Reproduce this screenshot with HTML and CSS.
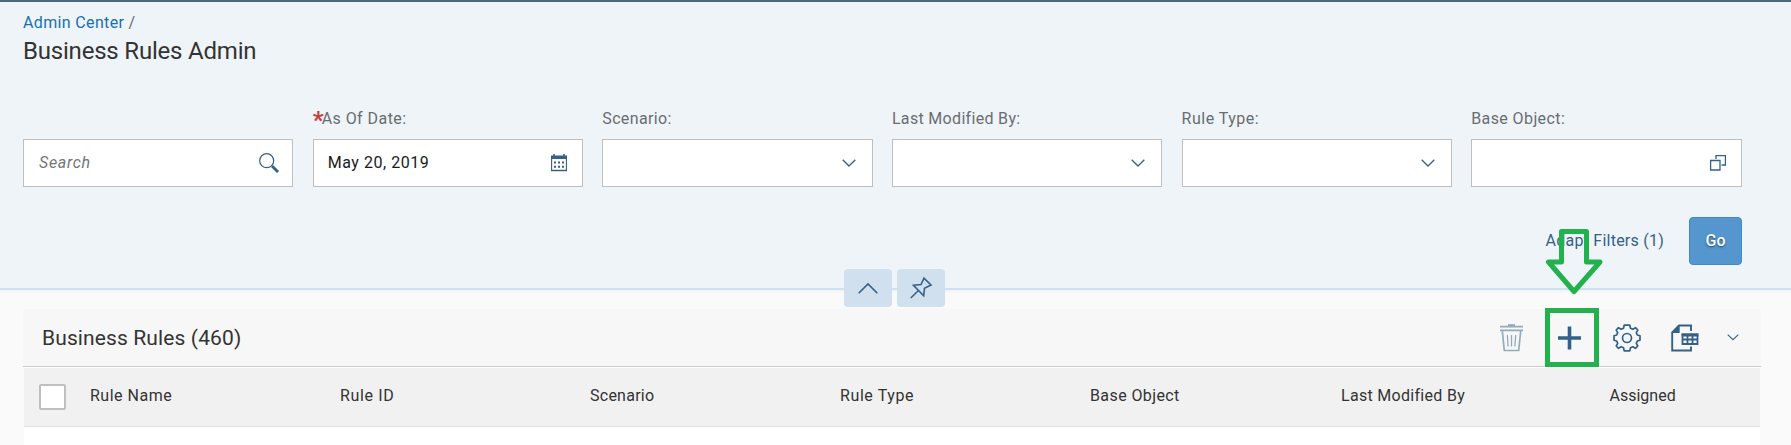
FILE: index.html
```html
<!DOCTYPE html>
<html>
<head>
    <meta charset="UTF-8">
    <title>Business Rules Admin</title>
    <link rel="stylesheet" href="styles.css">
</head>
<body>

<div class="header">
    <div class="crumb"><a>Admin Center</a> <span>/</span></div>
    <h1 class="title"><span>Business Rules Admin</span></h1>
    <div class="filters">
        <div class="field">
            <label></label>
            <div class="input">
                <span class="placeholder">Search</span>
                <svg class="ico-search" width="20" height="20" viewBox="0 0 20 20"><circle cx="7.7" cy="7.7" r="7" stroke-width="1.2"/><path d="M13 13l6 6" stroke-width="2.8"/></svg>
            </div>
        </div>
        <div class="field">
            <label><b class="required">*</b><span class="t-date">As Of Date:</span></label>
            <div class="input">
                <span class="value">May 20, 2019</span>
                <svg class="ico-date" width="16" height="18" viewBox="0 0 16 18"><path d="M.6 2v14.5h14.8V2" stroke-width="1.1"/><path d="M0 1.5h2.2V0h1.6v1.500h8.400V0h1.600v1.500H16V5H0z" fill="#346187" stroke="none"/><path d="M3 8.500h2m2 0h2m2 0h2M3 12.700h2m2 0h2m2 0h2" stroke-width="1.900"/><path d="M0 16.500h16" stroke-width="1.500"/></svg>
            </div>
        </div>
        <div class="field">
            <label><span class="t-scenario">Scenario:</span></label>
            <div class="input"><svg class="ico-down" width="14" height="8" viewBox="0 0 14 8"><path d="M.7.700l6.300 6.300 6.300-6.300"/></svg></div>
        </div>
        <div class="field">
            <label><span class="t-modified">Last Modified By:</span></label>
            <div class="input"><svg class="ico-down" width="14" height="8" viewBox="0 0 14 8"><path d="M.7.700l6.300 6.300 6.300-6.300"/></svg></div>
        </div>
        <div class="field">
            <label><span class="t-type">Rule Type:</span></label>
            <div class="input"><svg class="ico-down" width="14" height="8" viewBox="0 0 14 8"><path d="M.7.700l6.300 6.300 6.300-6.300"/></svg></div>
        </div>
        <div class="field">
            <label><span class="t-base">Base Object:</span></label>
            <div class="input"><svg class="ico-help" width="16" height="16" viewBox="0 0 16 16"><path d="M.6 5.500h9.400v9.500H.6zM6 4V.600h9.400V10H11.500"/></svg></div>
        </div>
    </div>
    <div class="actions">
        <a class="adapt">Adapt Filters (1)</a>
        <a class="go">Go</a>
    </div>
    <div class="toggles">
        <a><svg width="20" height="11" viewBox="0 0 20 11"><path d="M.7 10.300L10 1l9.300 9.300"/></svg></a>
        <a><svg width="22" height="22" viewBox="0 0 22 22"><path d="M.8 21l7.900-7.700M3.500 8.300l7.500-.800 3-6.300 7 6.800-6.500 3.200-.800 7.500z"/></svg></a>
    </div>
</div>

<div class="table">
    <div class="toolbar">
        <h2><span>Business Rules (460)</span></h2>
        <svg class="disabled" width="28" height="28" viewBox="0 0 28 28"><path d="M2 2.700h23M2 6.300h23" stroke-width="1.800"/><path d="M10 1.300h7" stroke-width="2.400"/><path d="M4.300 7l2 19.500h14.400l2-19.500" stroke-width="1.700"/><path d="M9.300 11l.800 11.500M13.500 11v11.500M17.700 11l-.800 11.500" stroke-width="1.300"/></svg>
        <svg width="28" height="28" viewBox="0 0 28 28"><path d="M2 14h23M13.500 2.500v23" stroke-width="3.600"/></svg>
        <svg width="28" height="28" viewBox="0 0 28 28"><path d="M11.200 1.200h5.600l.700 3 2.300 1 2.700-1.500 2.300 2.300-1.500 2.700 1 2.300 2.700.700v4.600l-2.700.700-1 2.300 1.500 2.700-2.300 2.300-2.700-1.500-2.300 1-.700 3h-5.600l-.700-3-2.300-1-2.700 1.500-2.300-2.300 1.500-2.700-1-2.300-2.700-.700v-4.600l2.700-.700 1-2.300-1.500-2.700 2.300-2.300 2.700 1.500 2.300-1z" stroke-width="1.700" stroke-linejoin="round"/><circle cx="14" cy="14" r="4.500" stroke-width="1.700"/></svg>
        <svg width="28" height="28" viewBox="0 0 28 28"><path d="M20 7V1.500H8L1.200 8.300v18.200H20v-4" stroke-width="1.900"/><path d="M8.700.700v8.300H.500z" fill="#346187" stroke="none"/><path d="M11.500 10.500h15v9.500h-15zM11 15.500h15.500M16.500 11v9M21.500 11v9" stroke-width="1.800"/><path d="M10.600 11h16.800" stroke-width="3"/></svg>
        <svg class="more" width="12" height="7" viewBox="0 0 12 7"><path d="M.7.700L6 5.700 11.300.700" stroke-width="1.100"/></svg>
    </div>
    <div class="columns">
        <i class="checkbox"></i>
        <span class="c-name">Rule Name</span>
        <span class="c-id">Rule ID</span>
        <span class="c-scenario">Scenario</span>
        <span class="c-type">Rule Type</span>
        <span class="c-base">Base Object</span>
        <span class="c-modified">Last Modified By</span>
        <span class="c-assigned">Assigned</span>
    </div>
    <div class="rows"></div>
</div>

<!-- callout on the add button -->
<svg class="arrow" width="60" height="70" viewBox="0 0 60 70"><path d="M16.500 6.500h25V37H55L29 66.500 3.500 37h13z"/></svg>
<div class="mark"></div>

</body>
</html>
```

FILE: styles.css
```css
*{margin:0;padding:0;box-sizing:border-box;}
body{width:1791px;height:445px;overflow:hidden;position:relative;font:16px/20px Roboto,"Liberation Sans",sans-serif;color:#333;background:#fafafa;}
svg{display:block;flex:none;fill:none;stroke:#346187;stroke-width:1.3;overflow:visible;}
h1,h2{font-weight:normal;}
i{font-style:normal;}
a{text-decoration:none;}

/* header */
.header{position:relative;height:290px;padding:10px 49.5px 0 23px;background:#eff4f9;border-top:2px solid #4b6a80;border-bottom:2px solid #d1e0ee;box-shadow:0 1px 2px #eaf0f6;}
.crumb{height:22px;line-height:22px;color:#6a6d70;letter-spacing:.35px;}
.crumb a{color:#1870b0;}
.title{height:34px;font-size:24px;line-height:34px;letter-spacing:-.2px;}
.filters{display:flex;gap:19.3px;padding-top:38px;}
.field{flex:1;}
.field label{display:flex;height:33px;line-height:26px;color:#6a6d70;}
.required{color:#cc3c3c;font-size:24px;line-height:29px;width:9px;}
.t-date{letter-spacing:.45px;}
.t-scenario{letter-spacing:.35px;}
.t-modified{letter-spacing:.32px;}
.t-type{letter-spacing:.5px;}
.t-base{letter-spacing:.4px;}
.input{display:flex;align-items:center;height:48px;padding:0 15px 0 14px;background:#fff;border:1px solid #bfbfbf;}
.input svg{margin-left:auto;}
.placeholder{padding-left:1px;font-style:italic;color:#757575;letter-spacing:.7px;}
.value{color:#1a1a1a;letter-spacing:.55px;}
.input .ico-search{margin-right:-2px;}
.input .ico-down{margin-right:1px;}
.actions{display:flex;justify-content:flex-end;align-items:center;gap:25px;padding-top:30px;}
.adapt{color:#346187;letter-spacing:.24px;}
.go{width:53px;height:48px;margin-right:-.5px;line-height:46px;text-align:center;color:#fff;font-weight:500;background:#5496cd;border:1px solid #4089c7;border-radius:4px;text-shadow:0 1px 2px rgba(0,0,0,.5);}
.toggles{position:absolute;left:844px;top:267px;display:flex;gap:5px;}
.toggles a{display:flex;align-items:center;justify-content:center;width:48px;height:38px;background:#d1e0ee;border-radius:4px;}
.toggles svg{stroke-width:1.6;}

/* table */
.table{width:1738px;margin:19px 0 0 23px;}
.toolbar{display:flex;align-items:center;gap:29.5px;height:58px;padding:0 22px 0 19px;background:#f7f7f7;border-bottom:1px solid #ccc;}
.toolbar h2{margin-right:auto;font-size:21px;line-height:28px;letter-spacing:.12px;}
.toolbar .more{margin-left:-1px;}
.disabled{opacity:.5;}
.columns{display:grid;grid-template-columns:51px 250px 250px 250px 250px 251px 268.500px 1fr;align-items:center;height:60px;margin:0 1px;padding-left:15px;background:#f1f1f1;border-top:1px solid #fff;border-bottom:1px solid #e0e0e0;}
.columns span{padding-bottom:3px;}
.c-name{letter-spacing:.5px;}
.c-id{letter-spacing:.65px;}
.c-scenario{letter-spacing:.25px;}
.c-type{letter-spacing:.6px;}
.c-base{letter-spacing:.4px;}
.c-modified{letter-spacing:.3px;}
.checkbox{width:27px;height:26px;background:#fff;border:2px solid #bfbfbf;border-radius:2px;}
.rows{height:20px;margin:0 1px;background:#fff;}

/* callout */
.arrow{position:absolute;left:1545px;top:225px;stroke:#22b14c;stroke-width:5;stroke-linejoin:round;}
.mark{position:absolute;left:1545px;top:308px;width:54px;height:59px;border:5px solid #22b14c;}
```
